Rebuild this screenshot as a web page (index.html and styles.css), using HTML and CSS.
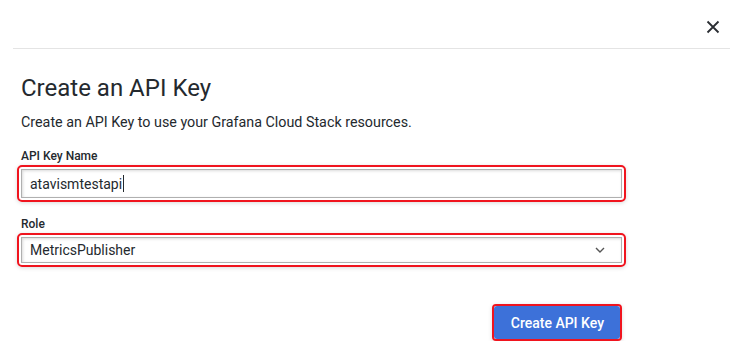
FILE: index.html
```html
<!DOCTYPE html>
<html lang="en">
<head>
    <meta charset="UTF-8">
    <meta name="viewport" content="width=device-width, initial-scale=1.0">
    <title>Create an API Key</title>
    <link rel="stylesheet" href="styles.css">
</head>
<body>
    <div class="modal">
        <div class="modal-header">
            <button class="close" aria-label="Close">
                <svg width="14" height="14" viewBox="0 0 14 14">
                    <path d="M1.5 1.5 L12.5 12.5 M12.5 1.5 L1.5 12.5" stroke="#2b2e33" stroke-width="1.8" fill="none"/>
                </svg>
            </button>
        </div>
        <div class="divider"></div>
        <div class="modal-body">
            <h1>Create an API Key</h1>
            <p class="intro">Create an API Key to use your Grafana Cloud Stack resources.</p>
            <form>
                <div class="field">
                    <label for="keyName">API Key Name</label>
                    <div class="highlight">
                        <div class="input">atavismtestapi<span class="caret"></span></div>
                    </div>
                </div>
                <div class="field">
                    <label for="role">Role</label>
                    <div class="highlight select-wrap">
                        <div class="input select">
                            <span>MetricsPublisher</span>
                            <svg width="10" height="6" viewBox="0 0 10 6">
                                <path d="M1 1 L5 5 L9 1" stroke="#555" stroke-width="1.4" fill="none"/>
                            </svg>
                        </div>
                    </div>
                </div>
                <div class="actions">
                    <div class="highlight btn-wrap">
                        <button type="button" class="btn-primary">Create API Key</button>
                    </div>
                </div>
            </form>
        </div>
    </div>
</body>
</html>
```

FILE: styles.css
```css
body {
    font-family: Roboto, 'Liberation Sans', sans-serif;
    margin: 0;
    background-color: white;
    color: #24292e;
}
.modal {
    width: 744px;
}
.modal-header {
    height: 48px;
    display: flex;
    justify-content: flex-end;
    align-items: flex-start;
}
.close {
    background: none;
    border: none;
    padding: 0;
    margin: 20px 24px 0 0;
    width: 14px;
    height: 14px;
    cursor: pointer;
}
.divider {
    height: 1px;
    background-color: #e4e4e4;
    margin: 0 14px 0 13px;
}
.modal-body {
    padding: 24px 0 0 21px;
}
h1 {
    font-size: 24px;
    font-weight: 400;
    margin: 0 0 11px;
    color: #24292e;
    line-height: 30px;
}
.intro {
    font-size: 14.3px;
    margin: 0 0 19px;
    color: #24292e;
}
.field {
    margin-bottom: 15px;
}
label {
    display: block;
    font-size: 12px;
    font-weight: 500;
    margin-bottom: 2px;
    color: #24292e;
}
.highlight {
    width: 601px;
    margin-left: -4px;
    border: 2px solid #f0141e;
    border-radius: 5px;
    padding: 2px;
    box-shadow: 0 1px 4px rgba(0, 0, 0, 0.15);
}
.input {
    height: 27px;
    border: 1px solid #b0b0b0;
    box-shadow: inset 1px 1px 3px rgba(0, 0, 0, 0.15);
    padding: 0 8px;
    display: flex;
    align-items: center;
    font-size: 14px;
    color: #24292e;
}
.caret {
    display: inline-block;
    width: 1px;
    height: 17px;
    background-color: #24292e;
    margin-left: 1px;
}
.select-wrap .input {
    height: 24px;
}
.select {
    justify-content: space-between;
    padding-right: 16px;
}
.actions {
    display: flex;
    justify-content: flex-end;
    width: 601px;
    padding-top: 22px;
}
.btn-wrap {
    width: auto;
    margin-left: 0;
    padding: 0;
    border-radius: 4px;
}
.btn-primary {
    background-color: #3d71d9;
    color: white;
    border: none;
    border-radius: 3px;
    font-family: Roboto, 'Liberation Sans', sans-serif;
    font-size: 14px;
    font-weight: 500;
    height: 33px;
    padding: 0 16px 0 17px;
}
```
